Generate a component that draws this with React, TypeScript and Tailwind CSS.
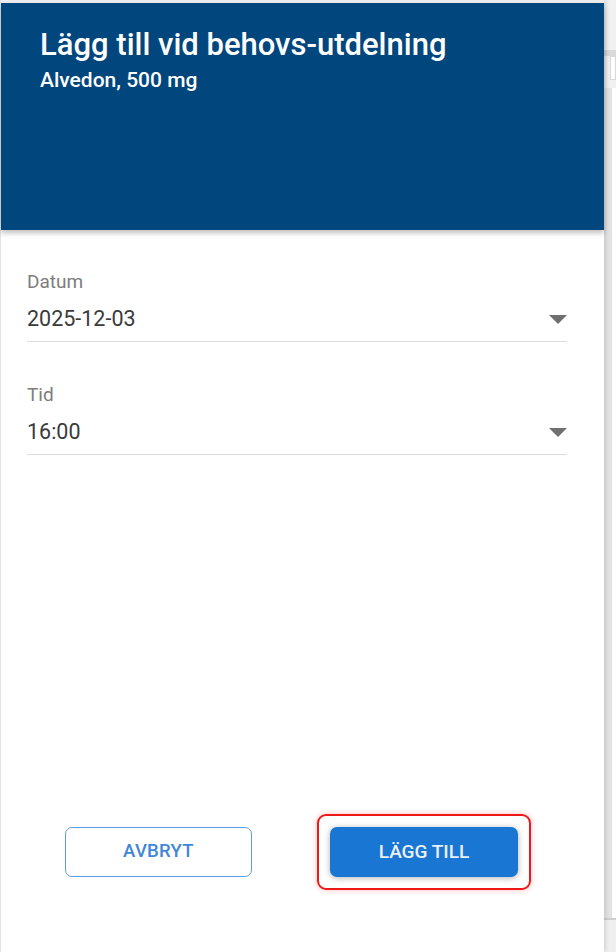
import React from "react";

function Caret() {
  return (
    <svg width="18" height="9" viewBox="0 0 18 9" className="shrink-0">
      <path d="M0 0 L18 0 L9 9 Z" fill="#6f6f6f" />
    </svg>
  );
}

function SelectField({ label, value }: { label: string; value: string }) {
  return (
    <div className="flex flex-col">
      <span className="text-[19px] leading-[22px] text-[#7d7d7d]">{label}</span>
      <div className="mt-[13px] flex items-center justify-between pb-[9px] border-b border-[#dcdcdc]">
        <span className="text-[21.5px] leading-[26px] text-[#3a3a3a]">{value}</span>
        <Caret />
      </div>
    </div>
  );
}

export default function App() {
  return (
    <div
      className="w-[616px] h-[952px] flex bg-white overflow-hidden"
      style={{ fontFamily: "Roboto, 'Noto Sans', Arial, sans-serif" }}
    >
      {/* dialog */}
      <div className="w-[604px] h-full flex flex-col bg-white border-l border-[#e2e2e2] shadow-[2px_0_4px_rgba(0,0,0,0.12)] relative z-10">
        <div className="h-[3px] bg-[#eeeeee]" />
        <div className="h-[227px] bg-[#01467d] pl-[39px] pt-[23px] shadow-[0_3px_5px_rgba(0,0,0,0.25)]">
          <h1 className="text-[31px] leading-[37px] font-medium text-white">Lägg till vid behovs-utdelning</h1>
          <p className="mt-[5px] text-[21px] leading-[25px] font-medium text-white">Alvedon, 500 mg</p>
        </div>

        <div className="flex-1 flex flex-col pl-[26px] pr-[37px] pt-[41px]">
          <SelectField label="Datum" value="2025-12-03" />
          <div className="h-[42px]" />
          <SelectField label="Tid" value="16:00" />
        </div>

        <div className="flex items-center pl-[64px] pb-[62px]">
          <button className="w-[187px] h-[50px] rounded-[7px] border-[1.5px] border-[#5c9de3] bg-white text-[#3f87d6] text-[18.5px] font-medium tracking-[0.3px]">
            AVBRYT
          </button>
          <div className="ml-[65px] p-[11px] rounded-[9px] border-2 border-[#f01818] shadow-[0_0_6px_rgba(255,0,0,0.25)]">
            <button className="w-[188px] h-[50px] rounded-[7px] bg-[#1976d3] text-[#eaf0f8] text-[19px] font-medium shadow-[0_1px_6px_rgba(0,0,0,0.3)]">
              LÄGG TILL
            </button>
          </div>
        </div>
      </div>

      {/* background page peeking out */}
      <div className="flex-1 flex flex-col bg-[#f1f1f1]">
        <div className="h-[50px]" />
        <div className="h-[6px] bg-[#dadada]" />
        <div className="h-[24px] ml-[6px] bg-white border border-[#d8d8d8]" />
        <div className="h-[8px] bg-[#f1f1f1]" />
        <div className="flex-1 flex">
          <div className="w-[7px] bg-[#e4e4e4]" />
          <div className="flex-1 bg-white border-l border-[#e0e0e0]" />
        </div>
        <div className="h-[2px] bg-[#cfcfcf]" />
        <div className="h-[32px] bg-[#f0f0f0]" />
      </div>
    </div>
  );
}
